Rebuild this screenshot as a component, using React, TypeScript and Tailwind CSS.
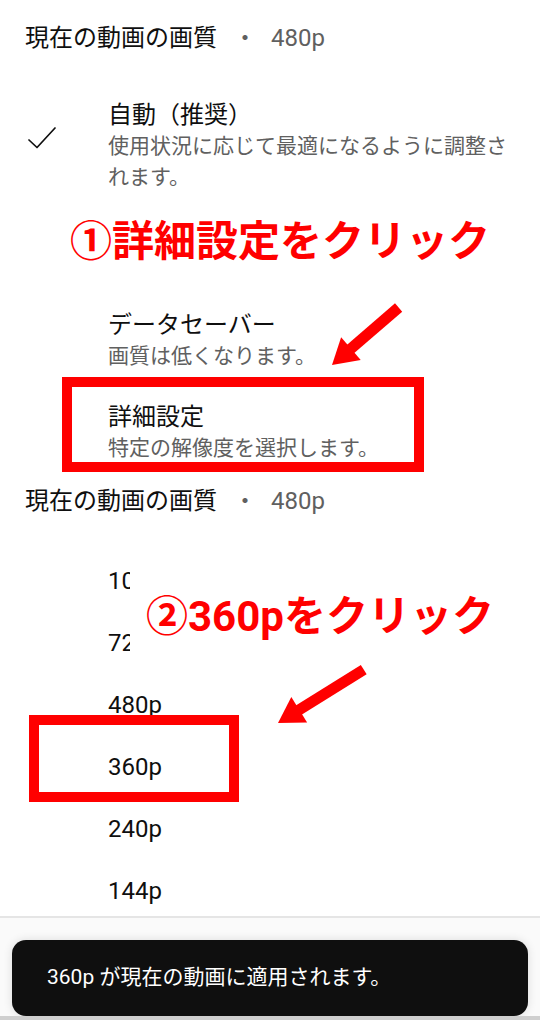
import React from 'react';

// first two rows are cut off by the annotation in the screenshot
const qualities = [
  { label: '1080p', clipped: true },
  { label: '720p', clipped: true },
  { label: '480p' },
  { label: '360p' },
  { label: '240p' },
  { label: '144p' },
];

interface HeaderProps {
  className?: string;
}

// "現在の動画の画質 ・ 480p"
const Header: React.FC<HeaderProps> = ({ className = '' }) => (
  <div className={`flex items-center pl-[25px] text-[24px] leading-none ${className}`}>
    <span className="text-[#0f0f0f]">現在の動画の画質</span>
    <span className="ml-[16px] text-[#606060]">・</span>
    <span className="ml-[14px] text-[#606060]">480p</span>
  </div>
);

interface MenuItemProps {
  title: string;
  sub: string;
  checked?: boolean;
  className?: string;
}

const MenuItem: React.FC<MenuItemProps> = ({ title, sub, checked, className = '' }) => (
  <div className={`flex ${className}`}>
    <div className="w-[108px] shrink-0 pl-[28px] pt-[27px]">
      {checked && (
        <svg width="28" height="22" viewBox="0 0 28 22" fill="none">
          <polyline
            points="1,13 9,20.5 27,1"
            stroke="#0f0f0f"
            strokeWidth="1.7"
            strokeLinecap="round"
            strokeLinejoin="round"
          />
        </svg>
      )}
    </div>
    <div className="flex-1 pr-[24px]">
      <div className="text-[24px] leading-[31px] text-[#0f0f0f]">{title}</div>
      <div className="text-[21px] leading-[31px] text-[#606060]">{sub}</div>
    </div>
  </div>
);

// red annotation arrows, drawn over the page
const Arrows = () => (
  <svg
    className="pointer-events-none absolute left-0 top-0"
    width="540"
    height="1020"
    viewBox="0 0 540 1020"
  >
    <g transform="translate(332 365) rotate(-40.8)" fill="#ff0000">
      <polygon points="0,0 25,-15 25,15" />
      <rect x="22" y="-5.5" width="66" height="11" />
    </g>
    <g transform="translate(278 723) rotate(-31.9)" fill="#ff0000">
      <polygon points="0,0 25,-15 25,15" />
      <rect x="22" y="-5.5" width="79" height="11" />
    </g>
  </svg>
);

export default function App() {
  return (
    <div className="relative h-[1020px] w-[540px] overflow-hidden bg-white font-[family-name:Roboto,'Noto_Sans_CJK_JP',sans-serif]">
      <Header className="h-[76px]" />

      <MenuItem
        className="pt-[24px]"
        checked
        title="自動（推奨）"
        sub="使用状況に応じて最適になるように調整されます。"
      />

      <div className="flex h-[98px] items-center pl-[70px] text-[42px] font-bold leading-none text-[#ff0000]">
        ①詳細設定をクリック
      </div>

      <MenuItem className="pt-[19px]" title="データセーバー" sub="画質は低くなります。" />
      <MenuItem className="pt-[30px]" title="詳細設定" sub="特定の解像度を選択します。" />

      <Header className="h-[74px]" />

      <div className="h-[378px] overflow-hidden pt-[12px]">
        {qualities.map((q) => (
          <div key={q.label} className="flex h-[62px] items-center pl-[108px] text-[24px] text-[#0f0f0f]">
            <span className={q.clipped ? 'w-[22px] overflow-hidden whitespace-nowrap' : ''}>{q.label}</span>
          </div>
        ))}
      </div>

      <div className="h-[2px] bg-[#e5e5e5]" />

      <div className="flex h-[102px] flex-col bg-[#fafafa] pt-[22px]">
        <div className="mx-[12px] flex h-[76px] items-center rounded-[14px] bg-[#0f0f0f] pl-[35px] text-[21px] text-white shadow-[0_0_10px_rgba(0,0,0,0.12)]">
          360p が現在の動画に適用されます。
        </div>
        <div className="h-[4px] bg-[#cfcfcf]" />
      </div>

      {/* annotations */}
      <div className="absolute left-[62px] top-[377px] h-[95px] w-[362px] border-[10px] border-[#ff0000]" />
      <div className="absolute left-[146px] top-[596px] text-[42px] font-bold leading-[42px] text-[#ff0000]">
        ②360pをクリック
      </div>
      <div className="absolute left-[29px] top-[715px] h-[87px] w-[210px] border-[10px] border-[#ff0000]" />
      <Arrows />
    </div>
  );
}
